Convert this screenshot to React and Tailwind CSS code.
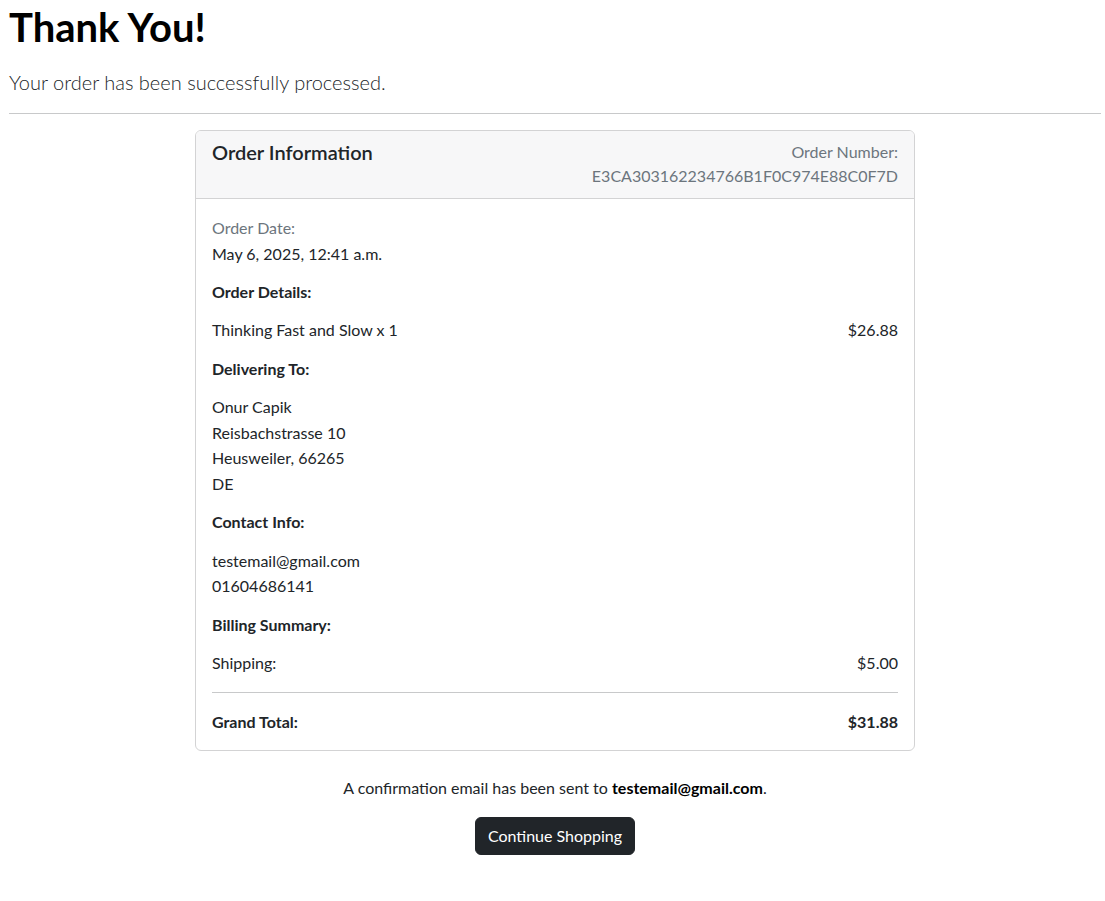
import React from 'react';

const order = {
    number: 'E3CA303162234766B1F0C974E88C0F7D',
    date: 'May 6, 2025, 12:41 a.m.',
    items: [{ name: 'Thinking Fast and Slow', qty: 1, price: '$26.88' }],
    address: ['Onur Capik', 'Reisbachstrasse 10', 'Heusweiler, 66265', 'DE'],
    email: 'testemail@gmail.com',
    phone: '01604686141',
    shipping: '$5.00',
    total: '$31.88',
};

const Row = ({ left, right, className = '' }) => (
    <div className={`flex justify-between ${className}`}>
        <span>{left}</span>
        <span>{right}</span>
    </div>
);

const App = () => {
    return (
        <div className="min-h-screen bg-white text-[#212529] font-['Lato',sans-serif] text-[16px] leading-[25.6px]">
            <div className="pl-[9px] pr-[4px] pt-[3px]">
                <h1 className="text-[40px] leading-[48px] font-bold text-black mb-4">Thank You!</h1>
                <p className="text-[20px] leading-[30px] font-light mb-4">Your order has been successfully processed.</p>
                <hr className="border-0 border-t border-[#c8c9ca] mb-4" />

                <div className="w-[720px] mx-auto border border-[#d3d3d4] rounded-[6px] overflow-hidden">
                    {/* Header */}
                    <div className="flex justify-between items-start px-4 pt-[9px] pb-[10px] bg-[#f7f7f8] border-b border-[#d3d3d4]">
                        <h5 className="text-[20px] leading-[24px] font-semibold">Order Information</h5>
                        <div className="text-right text-[#6c757d] leading-6">
                            <div>Order Number:</div>
                            <div>{order.number}</div>
                        </div>
                    </div>

                    {/* Body */}
                    <div className="p-4">
                        <p className="mb-[12.8px]">
                            <span className="text-[#6c757d]">Order Date:</span>
                            <br />
                            {order.date}
                        </p>

                        <p className="font-bold mb-[12.8px]">Order Details:</p>
                        {order.items.map(item => (
                            <Row
                                key={item.name}
                                left={`${item.name} x ${item.qty}`}
                                right={item.price}
                                className="mb-[12.8px]"
                            />
                        ))}

                        <p className="font-bold mb-[12.8px]">Delivering To:</p>
                        <p className="mb-[12.8px]">
                            {order.address.map((line, i) => (
                                <span key={i} className="block">{line}</span>
                            ))}
                        </p>

                        <p className="font-bold mb-[12.8px]">Contact Info:</p>
                        <p className="mb-[12.8px]">
                            {order.email}
                            <br />
                            {order.phone}
                        </p>

                        <p className="font-bold mb-[12.8px]">Billing Summary:</p>
                        <Row left="Shipping:" right={order.shipping} />
                        <hr className="border-0 border-t border-[#c8c9ca] my-4" />
                        <Row left="Grand Total:" right={order.total} className="font-bold" />
                    </div>
                </div>

                <p className="mt-6 text-center">
                    A confirmation email has been sent to <strong className="font-bold text-black">{order.email}</strong>.
                </p>
                <div className="flex justify-center mt-4">
                    <button className="bg-[#212529] text-white border border-[#212529] rounded-[6px] px-3 py-1.5 leading-6">
                        Continue Shopping
                    </button>
                </div>
            </div>
        </div>
    );
};

export default App;
